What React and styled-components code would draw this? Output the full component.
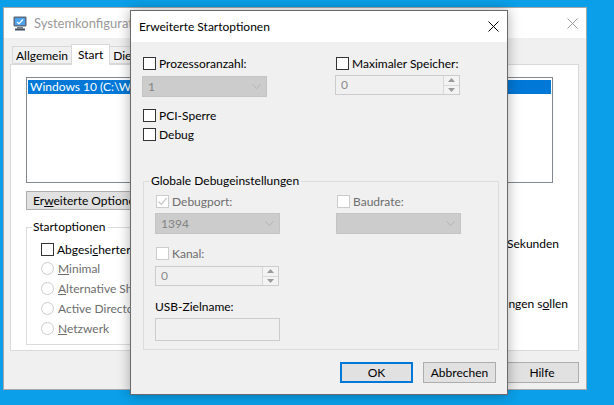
import React from "react";
import styled, { createGlobalStyle } from "styled-components";

const GlobalStyle = createGlobalStyle`
  html, body {
    margin: 0;
    padding: 0;
  }
  body {
    background: #0a9fe8;
    font-family: Lato, "Noto Sans", sans-serif;
    font-size: 12px;
    color: #000;
  }
`;

const Desktop = styled.div`
  position: relative;
  width: 614px;
  height: 405px;
  overflow: hidden;
  background: #0a9fe8;
`;

/* windows sit freely on the desktop */
const Window = styled.div`
  position: absolute;
  left: ${(p) => p.$x}px;
  top: ${(p) => p.$y}px;
  width: ${(p) => p.$w}px;
  height: ${(p) => p.$h}px;
  box-sizing: border-box;
  display: flex;
  flex-direction: column;
  background: #f0f0f0;
  border: 1px solid ${(p) => p.$border};
  box-shadow: ${(p) => p.$shadow || "none"};
`;

const TitleBar = styled.div`
  height: ${(p) => p.$h}px;
  flex: none;
  display: flex;
  align-items: center;
  background: #fff;
  padding: 0 ${(p) => p.$pr}px 0 ${(p) => p.$pl}px;
`;

const TitleText = styled.span`
  flex: 1;
  font-size: ${(p) => p.$size || 12}px;
  color: ${(p) => (p.$inactive ? "#999999" : "#000")};
  white-space: nowrap;
  overflow: hidden;
`;

const CloseX = ({ color }) => (
  <svg width="11" height="11" viewBox="0 0 11 11">
    <path d="M0.5 0.5 L10.5 10.5 M10.5 0.5 L0.5 10.5" stroke={color} strokeWidth="1" />
  </svg>
);

const AppIcon = () => (
  <svg width="14" height="15" viewBox="0 0 14 15" style={{ marginRight: 7 }}>
    <rect x="0.5" y="0.5" width="13" height="10" rx="1" fill="#5a6b80" />
    <rect x="2" y="2" width="10" height="7" fill="#4ba3f0" />
    <path d="M4 6 L6 7.6 L10 3.5" stroke="#fff" strokeWidth="1.2" fill="none" />
    <rect x="4" y="11" width="6" height="1.5" fill="#6c7a8c" />
    <rect x="2" y="12.5" width="10" height="2" rx="0.5" fill="#3f4c5c" />
  </svg>
);

/* ---------- common controls ---------- */

const CheckRow = styled.label`
  display: flex;
  align-items: center;
  gap: 3px;
  height: 13px;
  padding-left: 1px;
  margin-top: ${(p) => p.$mt || 0}px;
  line-height: 13px;
  white-space: nowrap;
  color: ${(p) => (p.$disabled ? "#6d6d6d" : "#000")};
`;

const Box = styled.span`
  box-sizing: border-box;
  width: 13px;
  height: 13px;
  flex: none;
  display: inline-flex;
  align-items: center;
  justify-content: center;
  background: #fff;
  border: 1px solid ${(p) => (p.$disabled ? "#cccccc" : "#333333")};
`;

const Check = ({ checked, disabled, mt, children }) => (
  <CheckRow $disabled={disabled} $mt={mt}>
    <Box $disabled={disabled}>
      {checked && (
        <svg width="11" height="11" viewBox="0 0 11 11">
          <path
            d="M1.5 5.5 L4.2 8.3 L9.6 2.2"
            fill="none"
            stroke={disabled ? "#c4c4c4" : "#333"}
            strokeWidth="1.2"
          />
        </svg>
      )}
    </Box>
    <span>{children}</span>
  </CheckRow>
);

const RadioRow = styled.label`
  display: flex;
  align-items: center;
  gap: 4px;
  height: 13px;
  padding-left: 14px;
  line-height: 13px;
  white-space: nowrap;
  color: #6d6d6d;
`;

const RadioDot = styled.span`
  box-sizing: border-box;
  width: 13px;
  height: 13px;
  flex: none;
  border-radius: 50%;
  background: #fff;
  border: 1px solid #cccccc;
`;

const Chevron = () => (
  <svg width="9" height="5" viewBox="0 0 9 5">
    <path d="M0.5 0.5 L4.5 4.5 L8.5 0.5" fill="none" stroke="#b3b3b3" strokeWidth="1" />
  </svg>
);

const ComboBox = styled.div`
  box-sizing: border-box;
  width: 125px;
  height: 21px;
  display: flex;
  align-items: center;
  justify-content: space-between;
  padding: 0 5px 0 5px;
  background: #cccccc;
  border: 1px solid #c4c4c4;
  color: #838383;
`;

const Combo = ({ value }) => (
  <ComboBox>
    <span>{value}</span>
    <Chevron />
  </ComboBox>
);

const SpinBox = styled.div`
  box-sizing: border-box;
  width: ${(p) => p.$w}px;
  height: 20px;
  display: flex;
  margin-top: ${(p) => p.$mt || 0}px;
  background: #f0f0f0;
  border: 1px solid #cccccc;
`;

const SpinValue = styled.span`
  flex: 1;
  padding-left: 5px;
  line-height: 18px;
  color: #8a8a8a;
`;

const SpinButtons = styled.div`
  width: 15px;
  display: flex;
  flex-direction: column;
  border-left: 1px solid #d9d9d9;
`;

const SpinButton = styled.span`
  flex: 1;
  display: flex;
  align-items: center;
  justify-content: center;
  background: #f3f3f3;
  & + & {
    border-top: 1px solid #d9d9d9;
  }
`;

const Spin = ({ value, w, mt }) => (
  <SpinBox $w={w} $mt={mt}>
    <SpinValue>{value}</SpinValue>
    <SpinButtons>
      <SpinButton>
        <svg width="7" height="4" viewBox="0 0 7 4">
          <path d="M0 4 L3.5 0 L7 4 Z" fill="#9a9a9a" />
        </svg>
      </SpinButton>
      <SpinButton>
        <svg width="7" height="4" viewBox="0 0 7 4">
          <path d="M0 0 L3.5 4 L7 0 Z" fill="#9a9a9a" />
        </svg>
      </SpinButton>
    </SpinButtons>
  </SpinBox>
);

const TextBox = styled.div`
  box-sizing: border-box;
  width: 125px;
  height: 23px;
  margin-top: 4px;
  background: #f0f0f0;
  border: 1px solid #cccccc;
`;

const PushButton = styled.button`
  box-sizing: border-box;
  width: ${(p) => p.$w || 73}px;
  height: ${(p) => p.$h || 21}px;
  padding: 0 6px;
  font: inherit;
  color: #000;
  white-space: nowrap;
  text-align: ${(p) => (p.$left ? "left" : "center")};
  background: #e1e1e1;
  border: ${(p) => (p.$default ? "2px solid #0078d7" : "1px solid #adadad")};
`;

const GroupBox = styled.fieldset`
  margin: ${(p) => p.$mt || 0}px 0 0 ${(p) => p.$ml || 0}px;
  padding: 0;
  width: ${(p) => p.$w}px;
  box-sizing: border-box;
  border: 1px solid #dcdcdc;
  min-width: 0;
  flex: none;
`;

const Legend = styled.legend`
  margin-left: ${(p) => p.$ml}px;
  padding: 0 2px 0 1px;
  line-height: 14px;
  color: #000;
`;

/* ---------- back window: Systemkonfiguration ---------- */

const BackBody = styled.div`
  flex: 1;
  display: flex;
  flex-direction: column;
  padding: 6px 7px 0 6px;
`;

const TabStrip = styled.div`
  display: flex;
  align-items: flex-end;
  height: 20px;
  padding-left: 2px;
`;

const Tab = styled.div`
  box-sizing: border-box;
  position: relative;
  z-index: ${(p) => (p.$active ? 1 : 0)};
  height: ${(p) => (p.$active ? 21 : 18)}px;
  margin-bottom: ${(p) => (p.$active ? -1 : 0)}px;
  padding: ${(p) => (p.$active ? "1px 6px 0" : "0 3px")};
  line-height: 17px;
  white-space: nowrap;
  background: ${(p) => (p.$active ? "#fff" : "#f0f0f0")};
  border: 1px solid #d9d9d9;
  border-bottom: ${(p) => (p.$active ? "none" : "1px solid #d9d9d9")};
  & + & {
    margin-left: -1px;
  }
`;

const TabPanel = styled.div`
  box-sizing: border-box;
  height: 287px;
  display: flex;
  flex-direction: column;
  padding: 12px 0 0 15px;
  background: #fff;
  border: 1px solid #d9d9d9;
`;

const ListBox = styled.div`
  box-sizing: border-box;
  width: 527px;
  height: 106px;
  padding: 2px 1px;
  border: 1px solid #828790;
`;

const ListItem = styled.div`
  height: 14px;
  line-height: 14px;
  padding-left: 2px;
  white-space: nowrap;
  overflow: hidden;
  color: ${(p) => (p.$selected ? "#fff" : "#000")};
  background: ${(p) => (p.$selected ? "#0078d7" : "transparent")};
`;

const PanelButtons = styled.div`
  display: flex;
  gap: 7px;
  margin-top: 8px;
`;

const LowerArea = styled.div`
  display: flex;
  margin-top: 10px;
`;

const GroupInner = styled.div`
  display: flex;
  flex-direction: column;
  gap: ${(p) => p.$gap || 0}px;
  padding: ${(p) => p.$pad};
`;

const SafeBootRow = styled.div`
  padding-left: 13px;
  margin-bottom: -1px;
`;

const TimeoutColumn = styled.div`
  display: flex;
  flex-direction: column;
  margin-left: 44px;
  line-height: 14px;
`;

const TimeoutRow = styled.div`
  display: flex;
  align-items: center;
  gap: 7px;
  height: 20px;
`;

const TimeoutField = styled.div`
  box-sizing: border-box;
  width: 100px;
  height: 20px;
  padding-left: 4px;
  line-height: 18px;
  background: #fff;
  border: 1px solid #7a7a7a;
`;

const PersistRow = styled.label`
  display: flex;
  align-items: flex-start;
  gap: 3px;
  margin-top: 43px;
  line-height: 14px;
`;

const PersistBox = styled(Box)`
  margin-top: 1px;
`;

const FooterButtons = styled.div`
  display: flex;
  justify-content: flex-end;
  gap: 7px;
  margin-top: 11px;
`;

/* ---------- front dialog: Erweiterte Startoptionen ---------- */

const DialogBody = styled.div`
  flex: 1;
  display: flex;
  flex-direction: column;
  padding: 15px 0 0 11px;
`;

const TwoCol = styled.div`
  display: grid;
  grid-template-columns: ${(p) => p.$col}px 1fr;
  row-gap: ${(p) => p.$gap}px;
  align-items: start;
  margin-top: ${(p) => p.$mt || 0}px;
`;

const FieldLabel = styled.div`
  margin-top: 14px;
  line-height: 14px;
  color: #000;
`;

const DialogButtons = styled.div`
  display: flex;
  justify-content: flex-end;
  gap: 10px;
  padding: 0 11px 11px 0;
`;

const BackWindow = () => (
  <Window $x={3} $y={7} $w={584} $h={383} $border="#a8a8a8">
    <TitleBar $h={30} $pl={9} $pr={8}>
      <AppIcon />
      <TitleText $inactive $size={13}>
        Systemkonfiguration
      </TitleText>
      <CloseX color="#9c9c9c" />
    </TitleBar>
    <BackBody>
      <TabStrip>
        <Tab>Allgemein</Tab>
        <Tab $active>Start</Tab>
        <Tab>Dienste</Tab>
        <Tab>Systemstart</Tab>
        <Tab>Tools</Tab>
      </TabStrip>
      <TabPanel>
        <ListBox>
          <ListItem $selected>
            Windows 10 (C:\Windows) : Aktuelles Betriebssystem; Standardbetriebssystem
          </ListItem>
        </ListBox>
        <PanelButtons>
          <PushButton $w={124} $h={19} $left>
            Er<u>w</u>eiterte Optionen...
          </PushButton>
          <PushButton $w={110} $h={19}>
            Als Standard
          </PushButton>
          <PushButton $w={75} $h={19}>
            Löschen
          </PushButton>
        </PanelButtons>
        <LowerArea>
          <GroupBox $w={330}>
            <Legend $ml={5}>Startoptionen</Legend>
            <GroupInner $gap={7} $pad="9px 0 9px 0">
              <SafeBootRow>
                <Check>
                  Abgesi<u>c</u>herter Start
                </Check>
              </SafeBootRow>
              <RadioRow>
                <RadioDot />
                <span>
                  <u>M</u>inimal
                </span>
              </RadioRow>
              <RadioRow>
                <RadioDot />
                <span>
                  <u>A</u>lternative Shell
                </span>
              </RadioRow>
              <RadioRow>
                <RadioDot />
                <span>Active Directory-Reparatur</span>
              </RadioRow>
              <RadioRow>
                <RadioDot />
                <span>
                  <u>N</u>etzwerk
                </span>
              </RadioRow>
            </GroupInner>
          </GroupBox>
          <TimeoutColumn>
            <span>
              <u>T</u>imeout:
            </span>
            <TimeoutRow>
              <TimeoutField>30</TimeoutField>
              <span>Sekunden</span>
            </TimeoutRow>
            <PersistRow>
              <PersistBox />
              <span>
                Alle Starteinstellungen s<u>o</u>llen
                <br />
                dauerhaft sein
              </span>
            </PersistRow>
          </TimeoutColumn>
        </LowerArea>
      </TabPanel>
      <FooterButtons>
        <PushButton $w={74}>OK</PushButton>
        <PushButton $w={74}>Abbrechen</PushButton>
        <PushButton $w={74}>Übernehmen</PushButton>
        <PushButton $w={74}>Hilfe</PushButton>
      </FooterButtons>
    </BackBody>
  </Window>
);

const AdvancedDialog = () => (
  <Window
    $x={130}
    $y={10}
    $w={378}
    $h={385}
    $border="#6a6a6a"
    $shadow="0 0 12px rgba(0, 0, 0, 0.32)"
  >
    <TitleBar $h={31} $pl={8} $pr={8}>
      <TitleText>Erweiterte Startoptionen</TitleText>
      <CloseX color="#000" />
    </TitleBar>
    <DialogBody>
      <TwoCol $col={193} $gap={6}>
        <Check>Prozessoranzahl:</Check>
        <Check>Maximaler Speicher:</Check>
        <Combo value="1" />
        <Spin value="0" w={125} mt={-1} />
      </TwoCol>
      <Check mt={12}>PCI-Sperre</Check>
      <Check mt={6}>Debug</Check>
      <GroupBox $w={356} $mt={33} $ml={1}>
        <Legend $ml={6}>Globale Debugeinstellungen</Legend>
        <GroupInner $pad="7px 0 8px 11px">
          <TwoCol $col={181} $gap={5}>
            <Check checked disabled>
              Debugport:
            </Check>
            <Check disabled>Baudrate:</Check>
            <Combo value="1394" />
            <Combo value="" />
          </TwoCol>
          <Check disabled mt={13}>
            Kanal:
          </Check>
          <Spin value="0" w={124} mt={6} />
          <FieldLabel>USB-Zielname:</FieldLabel>
          <TextBox />
        </GroupInner>
      </GroupBox>
    </DialogBody>
    <DialogButtons>
      <PushButton $default>OK</PushButton>
      <PushButton>Abbrechen</PushButton>
    </DialogButtons>
  </Window>
);

export default function App() {
  return (
    <>
      <GlobalStyle />
      <Desktop>
        <BackWindow />
        <AdvancedDialog />
      </Desktop>
    </>
  );
}
